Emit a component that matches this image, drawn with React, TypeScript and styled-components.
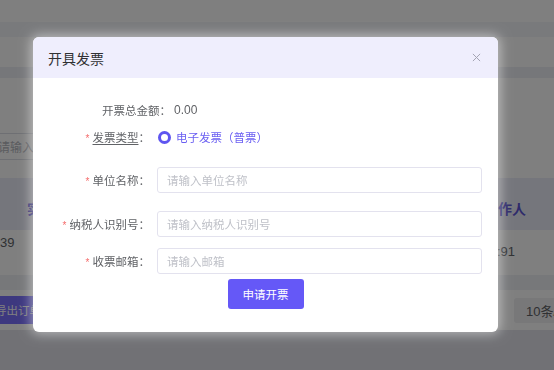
import styled, { createGlobalStyle } from 'styled-components';

const GlobalStyle = createGlobalStyle`
  html, body {
    margin: 0;
    padding: 0;
    overflow: hidden;
  }
  body {
    font-family: "Liberation Sans", "Noto Sans CJK SC", sans-serif;
    font-size: 12px;
    color: #606266;
  }
`;

const CJK = `"Noto Sans CJK SC", "Liberation Sans", sans-serif`;

/* ---------- page behind the dialog ---------- */

const Page = styled.div`
  width: 554px;
  height: 370px;
  background: #e2e3eb;
  overflow: hidden;
`;

const Strip = styled.div<{ $h: number; $bg: string }>`
  height: ${(p) => p.$h}px;
  background: ${(p) => p.$bg};
`;

const Card = styled.div`
  background: #ffffff;
  padding-top: 55px;
`;

const SearchBox = styled.div`
  width: 130px;
  height: 27px;
  margin-left: -14px;
  border: 1px solid #dcdfe6;
  border-radius: 3px;
  box-sizing: border-box;
  display: flex;
  align-items: center;
  padding-left: 11px;
  color: #b4b6bd;
  font-size: 12px;
`;

const TableHead = styled.div`
  margin-top: 18px;
  height: 52px;
  background: #ebecf8;
  display: flex;
  justify-content: space-between;
  align-items: center;
  color: #5d55d6;
  font-size: 14px;
  font-weight: bold;
`;

const HeadCell = styled.span<{ $left: number; $right: number }>`
  padding: 0 ${(p) => p.$right}px 0 ${(p) => p.$left}px;
  margin-top: 8px;
`;

const TableRow = styled.div`
  height: 45px;
  display: flex;
  justify-content: space-between;
  color: #606266;
  font-size: 13px;
`;

const RowCell = styled.span<{ $top: number; $right: number }>`
  padding-top: ${(p) => p.$top}px;
  padding-right: ${(p) => p.$right}px;
`;

const Footer = styled.div`
  height: 40px;
  display: flex;
  align-items: center;
  justify-content: space-between;
`;

const ExportButton = styled.div`
  height: 28px;
  padding: 0 8px 0 0;
  margin-left: -5px;
  background: #7a70ff;
  border-radius: 3px;
  color: #ffffff;
  font-size: 11.5px;
  display: flex;
  align-items: center;
`;

const PageSize = styled.div`
  height: 25px;
  width: 56px;
  margin-right: -28px;
  background: #f0f0f2;
  border-radius: 3px;
  color: #606266;
  font-size: 13px;
  display: flex;
  align-items: center;
  padding-left: 12px;
`;

/* ---------- dialog ---------- */

const Overlay = styled.div`
  position: fixed;
  inset: 0;
  background: rgba(0, 0, 0, 0.5);
`;

const Dialog = styled.div`
  position: absolute;
  left: 33px;
  top: 37px;
  width: 465px;
  height: 295px;
  background: #ffffff;
  border-radius: 6px;
  overflow: hidden;
  box-shadow: 0 0 12px 2px rgba(255, 255, 255, 0.5);
`;

const DialogHeader = styled.div`
  height: 41px;
  background: #efeefd;
  display: flex;
  align-items: center;
  justify-content: space-between;
  padding: 0 17px 0 15px;
`;

const Title = styled.span`
  font-family: ${CJK};
  font-size: 14px;
  color: #303133;
`;

const Close = styled.svg`
  width: 9px;
  height: 9px;
`;

const DialogBody = styled.div`
  padding: 22px 16px 0 0;
  display: flex;
  flex-direction: column;
  font-family: ${CJK};
  font-size: 11.5px;
`;

const FormItem = styled.div<{ $h: number; $mb: number }>`
  display: flex;
  align-items: center;
  height: ${(p) => p.$h}px;
  margin-bottom: ${(p) => p.$mb}px;
`;

const Label = styled.label<{ $w?: number; $gap?: number }>`
  width: ${(p) => p.$w ?? 117}px;
  flex: none;
  text-align: right;
  color: #606266;
  margin-right: ${(p) => p.$gap ?? 7}px;
  white-space: nowrap;
`;

/* full-width punctuation kept at one em */
const Wide = styled.span<{ $align?: string }>`
  display: inline-block;
  width: 1em;
  text-align: ${(p) => p.$align ?? 'left'};
`;

const Required = styled.span`
  color: #f56c6c;
  margin-right: 3px;
  font-family: "Liberation Sans", sans-serif;
  font-size: 10px;
`;

const Underlined = styled.span`
  text-decoration: underline;
  text-underline-offset: 2px;
`;

const Amount = styled.span`
  font-family: "Liberation Sans", sans-serif;
  font-size: 12px;
  color: #606266;
`;

const Radio = styled.div`
  display: flex;
  align-items: center;
  gap: 5px;
  color: #6a5ff2;
  padding-left: 1px;
`;

const RadioDot = styled.span`
  width: 13px;
  height: 13px;
  box-sizing: border-box;
  border-radius: 50%;
  border: 3px solid #5e55f0;
  background: #ffffff;
`;

const Input = styled.input`
  flex: 1;
  height: 26px;
  box-sizing: border-box;
  border: 1px solid #e3e2ee;
  border-radius: 3px;
  padding: 0 9px;
  font-family: inherit;
  font-size: 11.5px;
  color: #606266;
  outline: none;
  &::placeholder {
    color: #bfc1c8;
  }
`;

const SubmitButton = styled.button`
  align-self: center;
  margin-left: 16px;
  width: 76px;
  height: 30px;
  border: none;
  border-radius: 3px;
  background: #6558f7;
  color: #ffffff;
  font-family: inherit;
  font-size: 11.5px;
`;

export default function App() {
  return (
    <>
      <GlobalStyle />
      <Page>
        <Strip $h={22} $bg="#ffffff" />
        <Strip $h={15} $bg="#f3f4f9" />
        <Strip $h={30} $bg="#ffffff" />
        <Strip $h={11} $bg="#eceef4" />
        <Card>
          <SearchBox>请输入</SearchBox>
          <TableHead>
            <HeadCell $left={27} $right={0}>实</HeadCell>
            <HeadCell $left={0} $right={28}>操作人</HeadCell>
          </TableHead>
          <TableRow>
            <RowCell $top={5} $right={0}>39</RowCell>
            <RowCell $top={14} $right={39}>:91</RowCell>
          </TableRow>
          <Strip $h={15} $bg="#eef0f5" />
          <Footer>
            <ExportButton>导出订单</ExportButton>
            <PageSize>10条/页</PageSize>
          </Footer>
        </Card>
      </Page>

      <Overlay>
        <Dialog>
          <DialogHeader>
            <Title>开具发票</Title>
            <Close viewBox="0 0 10 10">
              <path d="M1 1 L9 9 M9 1 L1 9" stroke="#a3a3b3" strokeWidth="1.1" fill="none" />
            </Close>
          </DialogHeader>
          <DialogBody>
            <FormItem $h={20} $mb={7}>
              <Label $w={138} $gap={3}>
                开票总金额<Wide>：</Wide>
              </Label>
              <Amount>0.00</Amount>
            </FormItem>
            <FormItem $h={20} $mb={20}>
              <Label>
                <Required>*</Required>
                <Underlined>发票类型</Underlined>
                <Wide>：</Wide>
              </Label>
              <Radio>
                <RadioDot />
                <span>
                  电子发票<Wide $align="center">（</Wide>普票<Wide $align="center">）</Wide>
                </span>
              </Radio>
            </FormItem>
            <FormItem $h={26} $mb={18}>
              <Label>
                <Required>*</Required>单位名称<Wide>：</Wide>
              </Label>
              <Input placeholder="请输入单位名称" />
            </FormItem>
            <FormItem $h={26} $mb={11}>
              <Label>
                <Required>*</Required>纳税人识别号<Wide>：</Wide>
              </Label>
              <Input placeholder="请输入纳税人识别号" />
            </FormItem>
            <FormItem $h={26} $mb={5}>
              <Label>
                <Required>*</Required>收票邮箱<Wide>：</Wide>
              </Label>
              <Input placeholder="请输入邮箱" />
            </FormItem>
            <SubmitButton>申请开票</SubmitButton>
          </DialogBody>
        </Dialog>
      </Overlay>
    </>
  );
}
